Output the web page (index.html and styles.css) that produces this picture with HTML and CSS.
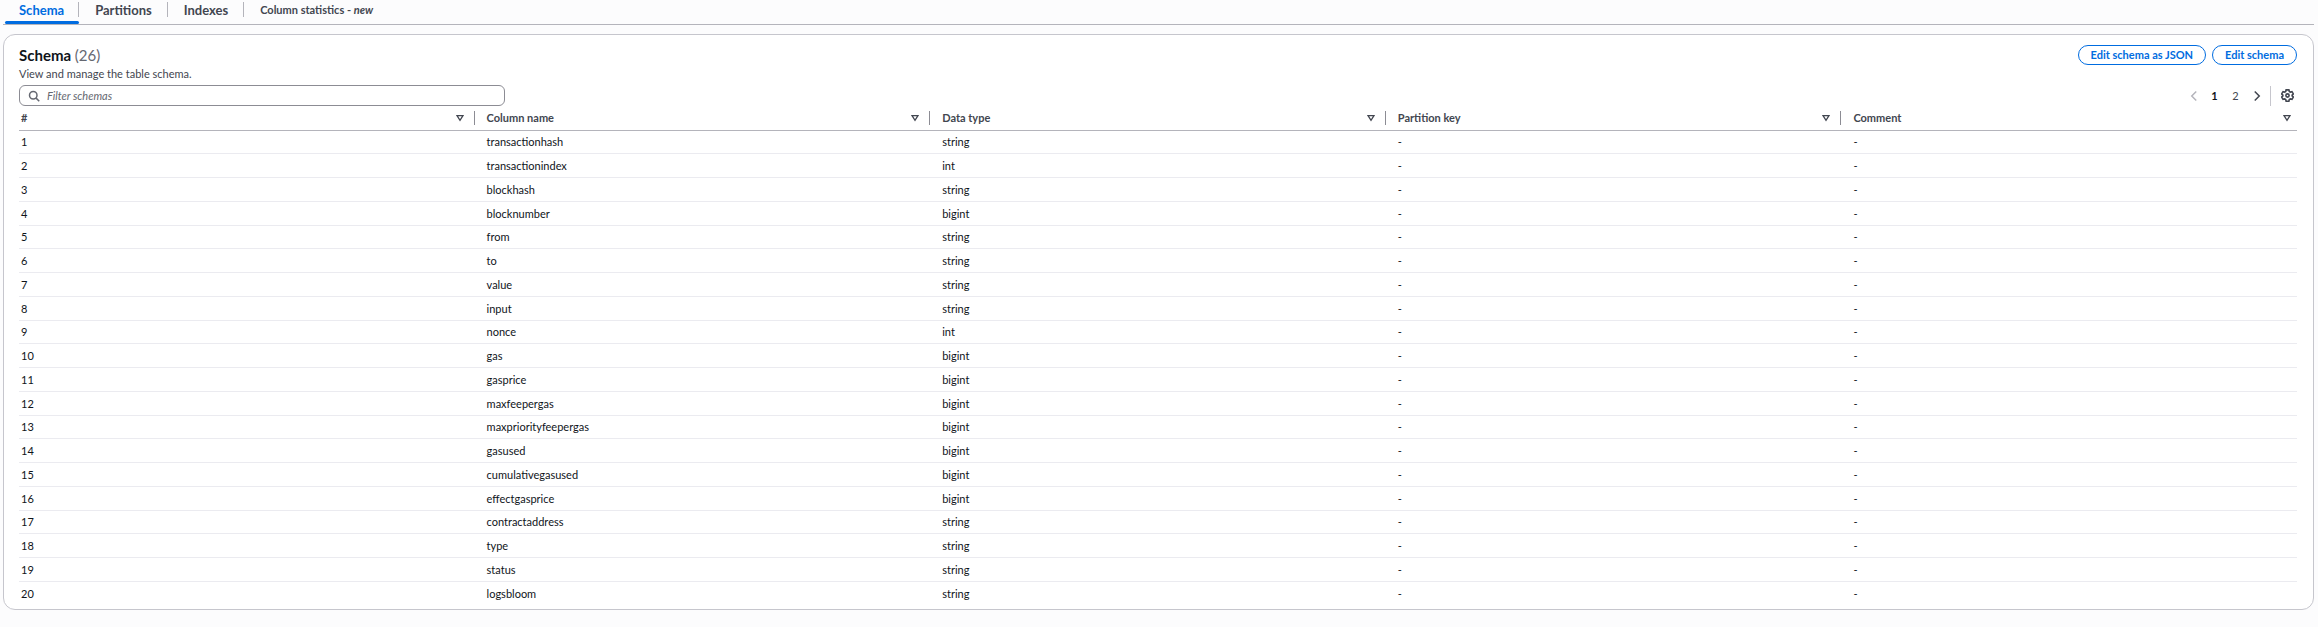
FILE: index.html
```html
<!DOCTYPE html>
<html lang="en">
<head>
<meta charset="utf-8">
<title>Schema</title>
<link rel="stylesheet" href="styles.css">
</head>
<body>
<nav class="tabs" aria-label="Table details">
  <a class="tab tab-active" href="#schema" aria-current="page">Schema</a>
  <a class="tab" href="#partitions">Partitions</a>
  <a class="tab" href="#indexes">Indexes</a>
  <a class="tab tab-small" href="#statistics">Column statistics - <em>new</em></a>
</nav>
<main class="card" id="schema">
  <header class="card-header">
    <div>
      <h2 class="title">Schema <span class="count">(26)</span></h2>
      <p class="description">View and manage the table schema.</p>
    </div>
    <div class="actions">
      <button class="button" type="button">Edit schema as JSON</button>
      <button class="button" type="button">Edit schema</button>
    </div>
  </header>
  <div class="tools">
    <label class="search">
      <svg class="search-icon" viewBox="0 0 16 16" aria-hidden="true"><circle cx="7" cy="7" r="5"/><path d="M10.8 10.8 15 15"/></svg>
      <input class="search-input" type="search" placeholder="Filter schemas" aria-label="Filter schemas">
    </label>
    <div class="pager">
      <button class="page page-off" type="button" aria-label="Previous page" disabled><svg class="chevron" viewBox="0 0 16 16"><path d="M11 2 5 8l6 6"/></svg></button>
      <button class="page page-current" type="button" aria-current="page">1</button>
      <button class="page" type="button">2</button>
      <button class="page" type="button" aria-label="Next page"><svg class="chevron" viewBox="0 0 16 16"><path d="m5 2 6 6-6 6"/></svg></button>
      <button class="settings" type="button" aria-label="Preferences"><svg class="gear" viewBox="0 0 16 16"><path d="M6.300 1h3.400l.5 2 1.300.8 2-.6 1.700 2.900-1.500 1.400v1l1.500 1.400-1.700 2.900-2-.6-1.300.8-.5 2H6.300l-.5-2-1.300-.8-2 .6L.8 9.900l1.500-1.400v-1L.8 6.100l1.700-2.900 2 .6L5.800 3z"/><circle cx="8" cy="8" r="2"/></svg></button>
    </div>
  </div>
  <table class="table">
    <thead><tr id="head"></tr></thead>
    <tbody id="rows"></tbody>
  </table>
</main>
<script src="table.js"></script>
</body>
</html>
```
FILE: styles.css
```css
* { box-sizing: border-box; }
body {
  margin: 0;
  padding: 0 4px 17px 3px;
  background: #fcfcfd;
  color: #0f141a;
  font: 11px/16px Lato, "Open Sans", sans-serif;
}
button, input { font: inherit; }
.tabs {
  display: flex;
  height: 25px;
  margin-bottom: 9px;
  padding-left: 2px;
  border-bottom: 1px solid #b4b4bb;
}
.tab {
  position: relative;
  padding: 2px 16px 0;
  color: #424650;
  font-size: 13px;
  font-weight: 700;
  text-decoration: none;
}
.tab:first-child { padding: 2px 15px 0 14px; }
.tab:not(:last-child)::after {
  content: "";
  position: absolute;
  top: 2px;
  right: 0;
  height: 15px;
  border-right: 1px solid #b4b4bb;
}
.tab-small { font-size: 11px; }
.tab-active { color: #006ce0; }
.tab-active::before {
  content: "";
  position: absolute;
  right: 0;
  bottom: 0;
  left: 0;
  height: 3px;
  border-radius: 2px;
  background: #006ce0;
}
.card {
  padding: 11px 16px 3px 15px;
  border: 1px solid #c6c6cd;
  border-radius: 12px;
  background: #fff;
}
.card-header, .tools {
  display: flex;
  justify-content: space-between;
}
.card-header { height: 39px; }
.title { margin: 0; font-size: 15px; line-height: 18px; font-weight: 700; }
.count { color: #656871; font-weight: 400; }
.description { margin: 2px 0 0; color: #424650; }
.actions { display: flex; gap: 6px; align-items: flex-start; margin-top: -1px; }
.button {
  height: 20px;
  padding: 0 12px 1px;
  border: 1px solid #006ce0;
  border-radius: 10px;
  background: #fff;
  color: #006ce0;
  font-weight: 700;
  line-height: 16px;
}
.tools { height: 21px; align-items: center; }
.search {
  display: flex;
  align-items: center;
  gap: 7px;
  width: 486px;
  height: 21px;
  padding: 0 8px;
  border: 1px solid #8c8c94;
  border-radius: 6px;
}
.search-icon, .chevron, .gear { fill: none; stroke: currentColor; stroke-width: 2; display: block; }
.search-icon { width: 12px; height: 12px; color: #656871; }
.search-input { flex: 1; padding: 0; border: 0; outline: 0; background: none; line-height: 16px; }
.search-input::placeholder { color: #656871; font-style: italic; opacity: 1; }
.pager { display: flex; align-items: center; }
.page, .settings {
  display: flex;
  align-items: center;
  justify-content: center;
  height: 20px;
  padding: 0;
  border: 0;
  background: none;
  color: #424650;
}
.page { width: 21px; }
.page-off { color: #b4b4bb; }
.page-current { color: #0f141a; font-weight: 700; }
.chevron { width: 12px; height: 12px; }
.settings { width: 27px; margin-left: 3px; padding-left: 6px; border-left: 1px solid #c6c6cd; }
.gear { width: 13px; height: 13px; }
.table { width: 100%; border-collapse: separate; border-spacing: 0; table-layout: fixed; }
.th, .td { padding: 0 12px; text-align: left; }
.th:first-child, .td:first-child { padding-left: 2px; }
.th { height: 25px; border-bottom: 1px solid #b4b4bb; color: #424650; font-weight: 700; }
.th:last-child { padding-right: 6px; }
.head-cell { display: flex; align-items: center; justify-content: space-between; }
.th:not(:last-child) { padding-right: 0; }
.th:not(:last-child) .head-cell { padding-right: 10px; border-right: 1px solid #8c8c94; height: 14px; }
.filter { display: flex; padding: 0; border: 0; background: none; color: #424650; }
.filter-icon { width: 8px; height: 8px; fill: none; stroke: currentColor; stroke-width: 2; }
.td { height: 24px; border-bottom: 1px solid #ebebf0; }
.row:nth-child(4n+1) .td { height: 23px; }
.row:last-child .td { border-bottom: 0; }
```
FILE: table.js
```js
const heads = ["#", "Column name", "Data type", "Partition key", "Comment"];
const fields = [
  ["transactionhash", "string"], ["transactionindex", "int"], ["blockhash", "string"],
  ["blocknumber", "bigint"], ["from", "string"], ["to", "string"], ["value", "string"],
  ["input", "string"], ["nonce", "int"], ["gas", "bigint"], ["gasprice", "bigint"],
  ["maxfeepergas", "bigint"], ["maxpriorityfeepergas", "bigint"], ["gasused", "bigint"],
  ["cumulativegasused", "bigint"], ["effectgasprice", "bigint"], ["contractaddress", "string"],
  ["type", "string"], ["status", "string"], ["logsbloom", "string"]
];
document.getElementById("head").innerHTML = heads.map(h =>
  `<th class="th" scope="col"><div class="head-cell">${h}<button class="filter" type="button" aria-label="Sort by ${h}"><svg class="filter-icon" viewBox="0 0 12 12"><path d="M1.500 2.500h9L6 9.500z"/></svg></button></div></th>`
).join("");
document.getElementById("rows").innerHTML = fields.map(([name, type], i) =>
  `<tr class="row">${[i + 1, name, type, "-", "-"].map(v => `<td class="td">${v}</td>`).join("")}</tr>`
).join("");
```
